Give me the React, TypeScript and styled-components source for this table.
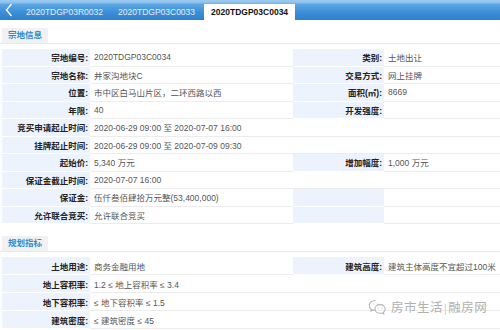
import styled, { createGlobalStyle } from 'styled-components';

const GlobalStyle = createGlobalStyle`
  html, body {
    margin: 0;
    padding: 0;
    background: #fff;
  }
  body {
    width: 500px;
    height: 330px;
    overflow: hidden;
    font-family: "Liberation Sans", "Noto Sans CJK SC", sans-serif;
    font-size: 8.5px;
    color: #333;
  }
`;

const Page = styled.div`
  position: relative;
  width: 500px;
  height: 330px;
  overflow: hidden;
`;

const TabBar = styled.div`
  display: flex;
  align-items: flex-end;
  gap: 1px;
  height: 20px;
  background: linear-gradient(
    #9ccbf1 0,
    #8ac0ec 3px,
    #5ca7e5 4px,
    #3d8fd8 12px,
    #2f80cc 20px
  );
`;

const BackButton = styled.div`
  width: 18px;
  height: 20px;
  display: flex;
  align-items: center;
  justify-content: center;
  align-self: stretch;
`;

const Tab = styled.div<{ $active?: boolean }>`
  height: 16px;
  padding: 0 7px;
  display: flex;
  align-items: center;
  font-size: 8.5px;
  white-space: nowrap;
  color: ${(p) => (p.$active ? '#111' : '#e4effa')};
  font-weight: ${(p) => (p.$active ? 'bold' : 'normal')};
  background: ${(p) => (p.$active ? '#fff' : 'transparent')};
  margin-left: ${(p) => (p.$active ? '1px' : '0')};
`;

const SectionHead = styled.div<{ $top: number }>`
  display: flex;
  margin-top: ${(p) => p.$top}px;
  padding-left: 2px;
  border-bottom: 1px solid #e8e8e8;
`;

const SectionTitle = styled.div`
  height: 15px;
  line-height: 15px;
  padding: 0 6px;
  background: #f1f1f1;
  color: #2a8ad2;
  font-weight: bold;
  font-size: 8.5px;
`;

const Table = styled.div<{ $rowH: number }>`
  display: grid;
  grid-template-columns: 88px 203px 91px 1fr;
  grid-auto-rows: ${(p) => p.$rowH}px;
  margin: 5px 0 0 2px;
`;

const Label = styled.div`
  display: flex;
  align-items: center;
  justify-content: flex-end;
  padding-right: 2px;
  background: #edf3fd;
  border-bottom: 1px solid #fff;
  color: #222;
  font-weight: bold;
  white-space: nowrap;
`;

const Value = styled.div<{ $span?: number }>`
  display: flex;
  align-items: center;
  padding-left: 4px;
  border-bottom: 1px solid #ececec;
  color: #555;
  white-space: nowrap;
  grid-column: span ${(p) => p.$span ?? 1};
`;

const Watermark = styled.div`
  position: absolute;
  left: 368px;
  top: 297px;
  display: flex;
  align-items: center;
  gap: 4px;
  color: #a9a9a9;
  font-family: "Noto Sans CJK SC", sans-serif;
  font-size: 12.5px;
  letter-spacing: 0.5px;
  opacity: 0.9;
`;

const Sep = styled.span`
  font-size: 10px;
  margin: 0 1px;
  color: #bbb;
`;

type Row = {
  label: string;
  value: string;
  label2?: string;
  value2?: string;
};

const landRows: Row[] = [
  { label: '宗地编号:', value: '2020TDGP03C0034', label2: '类别:', value2: '土地出让' },
  { label: '宗地名称:', value: '井家沟地块C', label2: '交易方式:', value2: '网上挂牌' },
  { label: '位置:', value: '市中区白马山片区，二环西路以西', label2: '面积(㎡):', value2: '8669' },
  { label: '年限:', value: '40', label2: '开发强度:', value2: '' },
  { label: '竞买申请起止时间:', value: '2020-06-29 09:00 至 2020-07-07 16:00' },
  { label: '挂牌起止时间:', value: '2020-06-29 09:00 至 2020-07-09 09:30' },
  { label: '起始价:', value: '5,340 万元', label2: '增加幅度:', value2: '1,000 万元' },
  { label: '保证金截止时间:', value: '2020-07-07 16:00' },
  { label: '保证金:', value: '伍仟叁佰肆拾万元整(53,400,000)', label2: '', value2: '' },
  { label: '允许联合竞买:', value: '允许联合竞买', label2: '', value2: '' },
];

const planRows: Row[] = [
  { label: '土地用途:', value: '商务金融用地', label2: '建筑高度:', value2: '建筑主体高度不宜超过100米' },
  { label: '地上容积率:', value: '1.2 ≤ 地上容积率 ≤ 3.4' },
  { label: '地下容积率:', value: '≤ 地下容积率 ≤ 1.5' },
  { label: '建筑密度:', value: '≤ 建筑密度 ≤ 45' },
];

const renderRows = (rows: Row[]) =>
  rows.map((r) =>
    r.label2 === undefined ? (
      [
        <Label key={r.label}>{r.label}</Label>,
        <Value key={r.label + 'v'} $span={3}>
          {r.value}
        </Value>,
      ]
    ) : (
      [
        <Label key={r.label}>{r.label}</Label>,
        <Value key={r.label + 'v'}>{r.value}</Value>,
        <Label key={r.label + 'l2'}>{r.label2}</Label>,
        <Value key={r.label + 'v2'}>{r.value2}</Value>,
      ]
    )
  );

const WeChatIcon = () => (
  <svg width="19" height="16" viewBox="0 0 19 16" fill="none" stroke="#b0b0b0" strokeWidth="1.1">
    <path d="M7.5 1.5c-3.6 0-6.3 2.2-6.3 5 0 1.5.8 2.8 2.1 3.7l-.5 1.8 2.1-1.1c.8.2 1.6.4 2.6.4" />
    <path d="M12.3 5.6c-3.1 0-5.4 1.9-5.4 4.3s2.3 4.3 5.4 4.3c.6 0 1.2-.1 1.7-.2l1.8 1-.4-1.6c1.1-.8 1.8-2 1.8-3.3 0-2.4-2.3-4.5-4.9-4.5z" />
    <circle cx="5.2" cy="5" r="0.6" fill="#b0b0b0" stroke="none" />
    <circle cx="9.4" cy="5" r="0.6" fill="#b0b0b0" stroke="none" />
    <circle cx="10.6" cy="9.2" r="0.5" fill="#b0b0b0" stroke="none" />
    <circle cx="14" cy="9.2" r="0.5" fill="#b0b0b0" stroke="none" />
  </svg>
);

const App = () => {
  return (
    <Page>
      <GlobalStyle />
      <TabBar>
        <BackButton>
          <svg width="8" height="14" viewBox="0 0 8 14">
            <path d="M6.5 1 L1.5 7 L6.5 13" fill="none" stroke="#fff" strokeWidth="1.3" />
          </svg>
        </BackButton>
        <Tab>2020TDGP03R0032</Tab>
        <Tab>2020TDGP03C0033</Tab>
        <Tab $active>2020TDGP03C0034</Tab>
      </TabBar>

      <SectionHead $top={8}>
        <SectionTitle>宗地信息</SectionTitle>
      </SectionHead>
      <Table $rowH={17.5}>{renderRows(landRows)}</Table>

      <SectionHead $top={12}>
        <SectionTitle>规划指标</SectionTitle>
      </SectionHead>
      <Table $rowH={18}>{renderRows(planRows)}</Table>

      <Watermark>
        <WeChatIcon />
        <span>
          房市生活<Sep>|</Sep>融房网
        </span>
      </Watermark>
    </Page>
  );
};

export default App;
